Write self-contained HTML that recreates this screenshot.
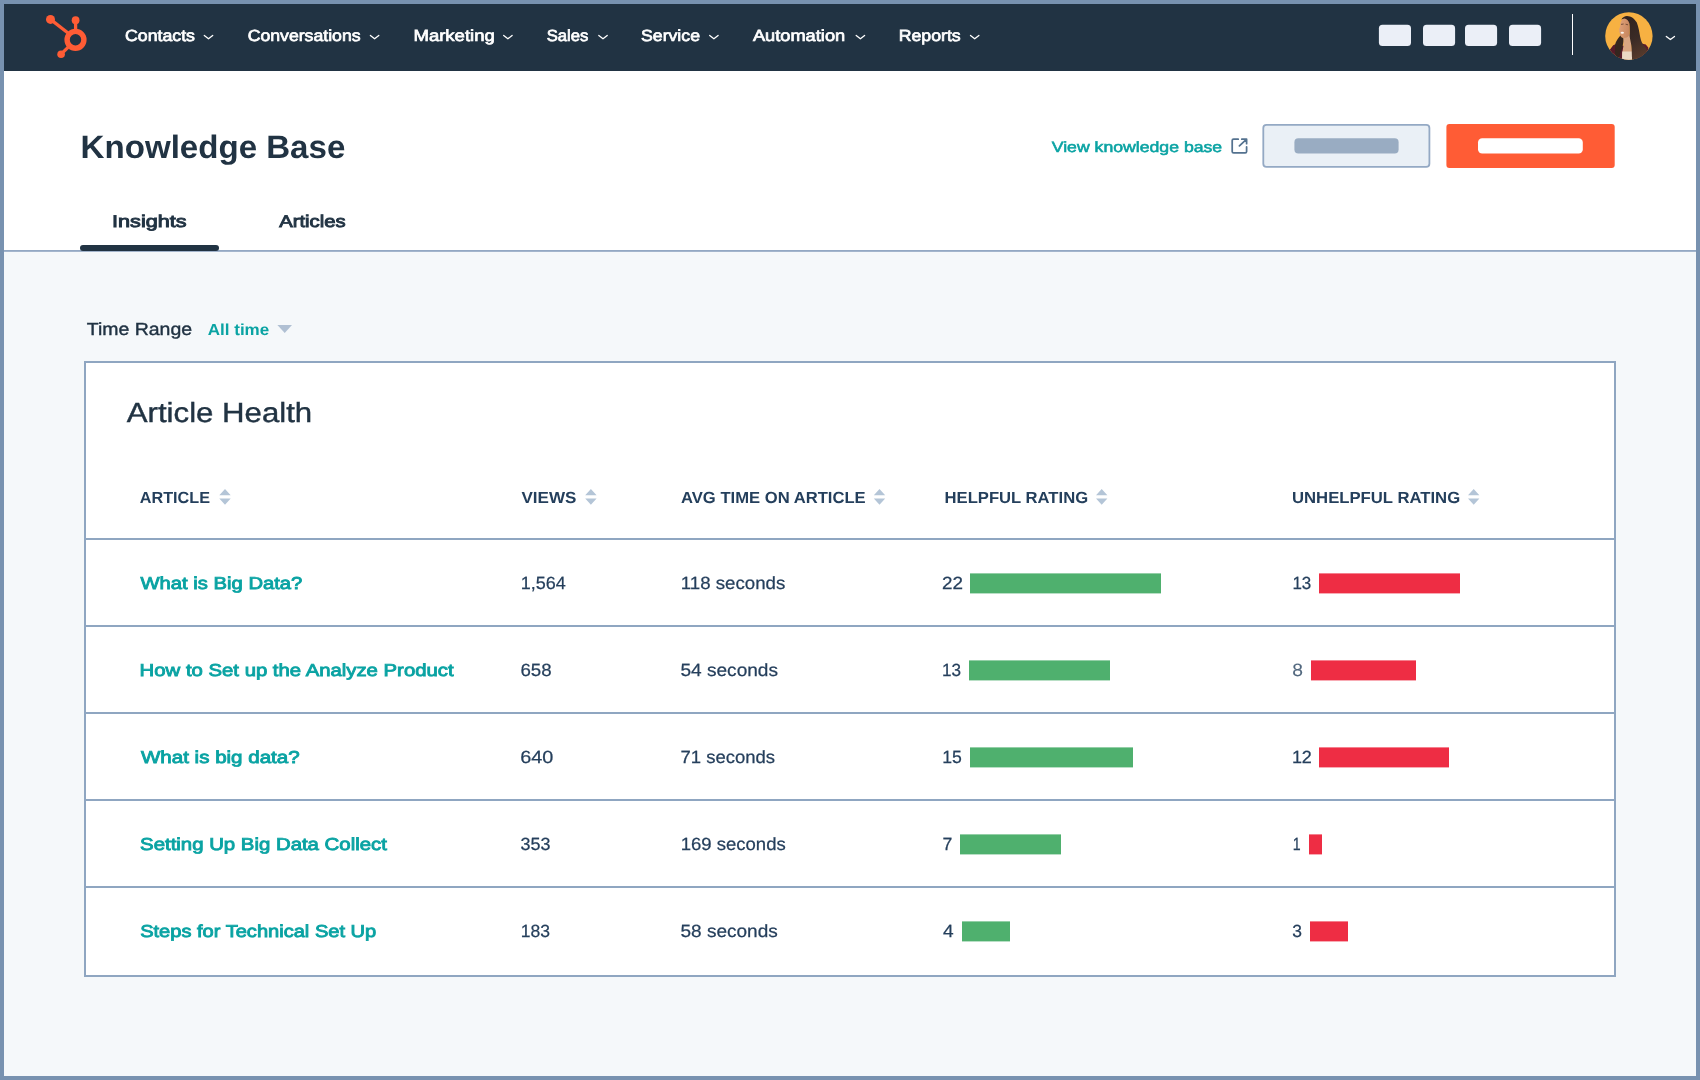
<!DOCTYPE html>
<html lang="en">
<head>
<meta charset="utf-8">
<title>Knowledge Base</title>
<style>

html,body{margin:0;padding:0}
body{width:1700px;height:1080px;overflow:hidden;background:#7892B0;font-family:"Liberation Sans",sans-serif;position:relative}
.t{position:absolute;white-space:nowrap;line-height:1;margin:0;padding:0;transform-origin:0 0;text-decoration:none;display:block}
.b{position:absolute}
svg{position:absolute;overflow:visible}
#txt{position:absolute;left:0;top:0;width:1692px;height:1072px;will-change:transform;text-rendering:geometricPrecision}
#app{position:absolute;left:4px;top:4px;width:1692px;height:1072px;background:#F5F8FA;overflow:hidden}
#nav{position:absolute;left:0;top:0;width:1692px;height:67px;background:#213343}
#hdr{position:absolute;left:0;top:67px;width:1692px;height:179px;background:#fff}
#hdrline{position:absolute;left:0;top:246px;width:1692px;height:2px;background:linear-gradient(#93A8C3 0,#93A8C3 50%,#A3B5CC 50%,#A3B5CC 100%)}
#card{position:absolute;left:80px;top:357px;width:1528px;height:612px;background:#fff;border:2px solid #8FA6C1}
.rl{position:absolute;left:82px;width:1528px;height:2px;background:#8FA6C1}
.pill{position:absolute;top:21px;width:32px;height:21px;border-radius:5px;background:#EAF0F6}
.gbar{position:absolute;height:20px;background:#4FB06E}
.rbar{position:absolute;height:20px;background:#EE2D44}

</style>
</head>
<body>
<div id="app">
<nav id="nav"></nav>
<header id="hdr"></header>
<div id="hdrline"></div>
<div id="tabbar" class="b" style="left:76px;top:241px;width:139px;height:6px;border-radius:3px;background:#213343"></div>
<section id="card"></section>
<div class="rl" style="top:534px"></div>
<div class="rl" style="top:621px"></div>
<div class="rl" style="top:708px"></div>
<div class="rl" style="top:795px"></div>
<div class="rl" style="top:882px"></div>
<div class="b" style="left:1568px;top:10px;width:1px;height:41px;background:#fff"></div>
<svg id="ico" style="left:-4px;top:-4px" width="1700" height="1080" viewBox="0 0 1700 1080">
<g id="pills" fill="#EBEFF7"><rect x="1378.9" y="24.8" width="32.1" height="21.3" rx="3.6"/><rect x="1423" y="24.8" width="32.1" height="21.3" rx="3.6"/><rect x="1465" y="24.8" width="32.1" height="21.3" rx="3.6"/><rect x="1509" y="24.8" width="32.1" height="21.3" rx="3.6"/></g>
<g id="bars">
<rect x="970" y="573.4" width="191" height="20" fill="#4FB06E"/><rect x="1319" y="573.4" width="141" height="20" fill="#EE2D44"/>
<rect x="969" y="660.4" width="141" height="20" fill="#4FB06E"/><rect x="1311" y="660.4" width="105" height="20" fill="#EE2D44"/>
<rect x="970" y="747.4" width="163" height="20" fill="#4FB06E"/><rect x="1319" y="747.4" width="130" height="20" fill="#EE2D44"/>
<rect x="960" y="834.4" width="101" height="20" fill="#4FB06E"/><rect x="1309" y="834.4" width="13" height="20" fill="#EE2D44"/>
<rect x="962" y="921.4" width="48" height="20" fill="#4FB06E"/><rect x="1310" y="921.4" width="38" height="20" fill="#EE2D44"/>
</g>
<g fill="#FF5C35" stroke="#FF5C35">
<circle cx="75.5" cy="39.8" r="8.4" fill="none" stroke-width="5.4"/>
<circle cx="50.5" cy="19.4" r="4.5" stroke="none"/>
<circle cx="75.6" cy="20.2" r="3.9" stroke="none"/>
<circle cx="61.1" cy="54.2" r="3.8" stroke="none"/>
<line x1="50.5" y1="19.4" x2="68" y2="33" stroke-width="3.3"/>
<line x1="75.6" y1="20.2" x2="75.6" y2="30" stroke-width="3.3"/>
<line x1="61.1" y1="54.2" x2="68.5" y2="46.8" stroke-width="3.3"/>
</g>
<path d="M204.3 35.5 L208.5 38.8 L212.7 35.5" fill="none" stroke="#fff" stroke-width="1.3" stroke-linecap="round" stroke-linejoin="round"/>
<path d="M370.4 35.5 L374.6 38.8 L378.8 35.5" fill="none" stroke="#fff" stroke-width="1.3" stroke-linecap="round" stroke-linejoin="round"/>
<path d="M503.7 35.5 L507.9 38.8 L512.1 35.5" fill="none" stroke="#fff" stroke-width="1.3" stroke-linecap="round" stroke-linejoin="round"/>
<path d="M598.8 35.5 L603.0 38.8 L607.2 35.5" fill="none" stroke="#fff" stroke-width="1.3" stroke-linecap="round" stroke-linejoin="round"/>
<path d="M709.7 35.5 L713.9 38.8 L718.1 35.5" fill="none" stroke="#fff" stroke-width="1.3" stroke-linecap="round" stroke-linejoin="round"/>
<path d="M856.2 35.5 L860.4 38.8 L864.6 35.5" fill="none" stroke="#fff" stroke-width="1.3" stroke-linecap="round" stroke-linejoin="round"/>
<path d="M970.5 35.5 L974.7 38.8 L978.9 35.5" fill="none" stroke="#fff" stroke-width="1.3" stroke-linecap="round" stroke-linejoin="round"/>
<path d="M1666.3 36.4 L1670.4 39.6 L1674.5 36.4" fill="none" stroke="#fff" stroke-width="1.3" stroke-linecap="round" stroke-linejoin="round"/>
<g id="avatar"><defs><clipPath id="avc"><circle cx="1628.9" cy="36" r="23.7"/></clipPath>
<linearGradient id="hairg" x1="0" y1="0" x2="0.3" y2="1"><stop offset="0" stop-color="#2E211E"/><stop offset="0.6" stop-color="#3B2B26"/><stop offset="1" stop-color="#54392B"/></linearGradient>
<linearGradient id="sking" x1="0" y1="0" x2="1" y2="0.3"><stop offset="0" stop-color="#E2A47C"/><stop offset="1" stop-color="#C98860"/></linearGradient></defs>
<circle cx="1628.9" cy="36" r="23.7" fill="#F7B142"/>
<g clip-path="url(#avc)">
<path d="M1607 53 L1610.2 49.2 L1613.2 45.2 L1616.5 43.8 L1624 46 L1624 62 L1607 62Z" fill="#561A29"/>
<path d="M1636 46 L1641.5 43.4 L1645.8 44.4 L1648.2 47.5 L1649 54 L1640 62 L1634 62Z" fill="#5B1B2B"/>
<path d="M1622.8 36 L1630.4 34 L1631.2 45 L1632 52 L1632 61 L1622 61 L1622.4 52 L1623.6 45Z" fill="#D9A582"/>
<path d="M1622.2 51.5 L1632 51.5 L1632 61 L1622 61Z" fill="#EAD8C4"/>
<path d="M1624.2 18.3 C1626.5 17.8 1628.8 19.5 1629.4 22 L1629.8 30 L1629 35.5 C1627.5 37.6 1625 38.2 1623.3 37.9 C1621.5 37.8 1620.3 37 1620.2 35.6 L1619.9 33.4 L1619.2 31.4 L1619.4 30 L1618.9 29.3 L1620 27 L1620.4 23.5 C1620.8 21 1622.2 19 1624.2 18.3Z" fill="url(#sking)"/>
<ellipse cx="1622.3" cy="32.7" rx="1.7" ry="0.95" fill="#FBF3EC"/>
<path d="M1621 24.4 L1623.6 24 M1625.6 24.2 L1628 24.8" stroke="#4A2E22" stroke-width="0.9" fill="none" opacity="0.75"/>
<path d="M1621.3 19.6 C1622.6 17.3 1624.8 16.2 1627 16 C1631 16.1 1634.6 18.6 1636.8 22.6 C1638.6 27 1639.3 32 1640.2 37 C1641 41 1642.2 44.2 1644.6 46.4 C1647 48.6 1647.2 50.6 1646.2 52.6 C1644.4 56 1641 58.6 1637.6 60 L1632.2 61.5 C1631.8 56 1631.9 50 1631.4 46 C1631 42.4 1630 39.4 1629.6 36 C1629.9 32 1630 27 1629.4 23.4 C1628.6 20.6 1626.6 18.8 1624.4 18.4 C1623.2 18.5 1622.2 19 1621.3 19.6Z" fill="url(#hairg)"/>
<path d="M1620.4 35.4 C1620.8 37 1622 37.8 1623.2 38 C1623.6 40.4 1623.4 43 1622.6 46 C1621.8 49 1620.8 52 1619.6 55.6 C1618.8 57.8 1617.6 58 1616.4 56.6 C1615 54.6 1614.6 52 1615 49.6 C1615.4 47.4 1614.8 45.6 1615.4 43.6 C1616 41.4 1617.4 39.4 1618.6 37.8 C1619.4 36.8 1619.9 36 1620.4 35.4Z" fill="#35261F"/>
</g></g>
<g id="btn-secondary"><rect x="1263.3" y="124.8" width="166.1" height="42.1" rx="3.2" fill="#EAF0F6" stroke="#94A9C4" stroke-width="1.8"/><rect x="1294.4" y="138.3" width="104.2" height="15.3" rx="4" fill="#99ACC2"/></g>
<g id="btn-primary"><rect x="1446.4" y="123.9" width="168.3" height="44" rx="3" fill="#FF5C35"/><rect x="1478" y="138.2" width="104.8" height="15.4" rx="4.2" fill="#fff"/></g>
<g id="ext-link" fill="none" stroke="#54728F" stroke-width="1.75" stroke-linecap="round" stroke-linejoin="round"><path d="M1238.2 139.2 H1233.6 Q1232.2 139.2 1232.2 140.6 V151.4 Q1232.2 152.8 1233.6 152.8 H1245.2 Q1246.6 152.8 1246.6 151.4 V146.9"/><path d="M1239.4 145.8 L1246.4 139.4 M1241.8 139.2 H1246.6 V143.7"/></g>
<path d="M277.4 325 H292 L284.7 333 Z" fill="#B0C0D3"/>
<path d="M219.3 495.2 L225.0 489 L230.70000000000002 495.2 Z M219.3 498.5 L225.0 504.8 L230.70000000000002 498.5 Z" fill="#B4C5D7"/>
<path d="M585.2 495.2 L590.9000000000001 489 L596.6 495.2 Z M585.2 498.5 L590.9000000000001 504.8 L596.6 498.5 Z" fill="#B4C5D7"/>
<path d="M873.8 495.2 L879.5 489 L885.1999999999999 495.2 Z M873.8 498.5 L879.5 504.8 L885.1999999999999 498.5 Z" fill="#B4C5D7"/>
<path d="M1096 495.2 L1101.7 489 L1107.4 495.2 Z M1096 498.5 L1101.7 504.8 L1107.4 498.5 Z" fill="#B4C5D7"/>
<path d="M1468 495.2 L1473.7 489 L1479.4 495.2 Z M1468 498.5 L1473.7 504.8 L1479.4 498.5 Z" fill="#B4C5D7"/>
</svg>
<div id="txt">
<a id="nav0" class="t" style="left:121px;top:24px;font-size:16.14px;font-weight:400;color:#fff;-webkit-text-stroke:0.7px #fff;transform:translate(0.01px,0.00px) scale(1.0995,1.0000);">Contacts</a>
<a id="nav1" class="t" style="left:243px;top:24px;font-size:16.14px;font-weight:400;color:#fff;-webkit-text-stroke:0.7px #fff;transform:translate(0.63px,0.00px) scale(1.0957,1.0000);">Conversations</a>
<a id="nav2" class="t" style="left:409px;top:24px;font-size:16.14px;font-weight:400;color:#fff;-webkit-text-stroke:0.7px #fff;transform:translate(0.46px,0.00px) scale(1.1481,1.0000);">Marketing</a>
<a id="nav3" class="t" style="left:542px;top:24px;font-size:16.14px;font-weight:400;color:#fff;-webkit-text-stroke:0.7px #fff;transform:translate(0.67px,0.00px) scale(1.0336,1.0000);">Sales</a>
<a id="nav4" class="t" style="left:637px;top:24px;font-size:16.14px;font-weight:400;color:#fff;-webkit-text-stroke:0.7px #fff;transform:translate(0.02px,0.00px) scale(1.0963,1.0000);">Service</a>
<a id="nav5" class="t" style="left:748px;top:24px;font-size:16.14px;font-weight:400;color:#fff;-webkit-text-stroke:0.7px #fff;transform:translate(0.91px,0.00px) scale(1.1311,1.0000);">Automation</a>
<a id="nav6" class="t" style="left:894px;top:24px;font-size:16.14px;font-weight:400;color:#fff;-webkit-text-stroke:0.7px #fff;transform:translate(0.73px,0.00px) scale(1.0978,1.0000);">Reports</a>
<h1 id="title" class="t" style="left:76px;top:127px;font-size:32.34px;font-weight:700;color:#213343;transform:translate(0.60px,0.00px) scale(1.0232,1.0000);">Knowledge Base</h1>
<a id="tab0" class="t" style="left:108px;top:210px;font-size:16.93px;font-weight:400;color:#213343;-webkit-text-stroke:0.9px #213343;transform:translate(0.04px,0.00px) scale(1.2796,1.0000);">Insights</a>
<a id="tab1" class="t" style="left:275px;top:210px;font-size:16.93px;font-weight:400;color:#213343;-webkit-text-stroke:0.9px #213343;transform:translate(0.22px,0.00px) scale(1.1974,1.0000);">Articles</a>
<a id="viewkb" class="t" style="left:1047px;top:137px;font-size:14.91px;font-weight:400;color:#0AA3A3;-webkit-text-stroke:0.55px #0AA3A3;transform:translate(0.74px,0.00px) scale(1.1843,1.0000);">View knowledge base</a>
<label id="trl" class="t" style="left:82px;top:317px;font-size:17.56px;font-weight:400;color:#213343;-webkit-text-stroke:0.4px #213343;transform:translate(0.76px,0.00px) scale(1.1095,1.0000);">Time Range</label>
<a id="trv" class="t" style="left:203px;top:319px;font-size:15.93px;font-weight:700;color:#0AA3A3;transform:translate(0.72px,0.00px) scale(1.0697,1.0000);">All time</a>
<h2 id="h2" class="t" style="left:122px;top:395px;font-size:27.73px;font-weight:400;color:#213343;-webkit-text-stroke:0.4px #213343;transform:translate(0.77px,0.00px) scale(1.1250,1.0000);">Article Health</h2>
<span id="th0" class="t" style="left:135px;top:486px;font-size:16.08px;font-weight:700;color:#243F5C;transform:translate(0.73px,0.00px) scale(1.0081,1.0000);">ARTICLE</span>
<span id="th1" class="t" style="left:517px;top:486px;font-size:16.08px;font-weight:700;color:#243F5C;transform:translate(0.42px,0.00px) scale(1.0608,1.0000);">VIEWS</span>
<span id="th2" class="t" style="left:677px;top:486px;font-size:16.08px;font-weight:700;color:#243F5C;transform:translate(0.01px,0.00px) scale(1.0336,1.0000);">AVG TIME ON ARTICLE</span>
<span id="th3" class="t" style="left:940px;top:486px;font-size:16.08px;font-weight:700;color:#243F5C;transform:translate(0.57px,0.00px) scale(1.0344,1.0000);">HELPFUL RATING</span>
<span id="th4" class="t" style="left:1287px;top:486px;font-size:16.08px;font-weight:700;color:#243F5C;transform:translate(0.96px,0.00px) scale(1.0383,1.0000);">UNHELPFUL RATING</span>
<a id="r0a" class="t" style="left:136px;top:571px;font-size:17.26px;font-weight:400;color:#0AA3A3;-webkit-text-stroke:0.85px #0AA3A3;transform:translate(0.53px,0.00px) scale(1.1720,1.0000);">What is Big Data?</a>
<span id="r0v" class="t" style="left:516px;top:571px;font-size:17.69px;font-weight:400;color:#253F5C;-webkit-text-stroke:0.25px #253F5C;transform:translate(0.86px,0.00px) scale(1.0167,1.0000);">1,564</span>
<span id="r0t" class="t" style="left:676px;top:571px;font-size:17.69px;font-weight:400;color:#253F5C;-webkit-text-stroke:0.25px #253F5C;transform:translate(0.81px,0.00px) scale(1.0552,1.0000);">118 seconds</span>
<span id="r0h" class="t" style="left:938px;top:571px;font-size:17.69px;font-weight:400;color:#253F5C;-webkit-text-stroke:0.25px #253F5C;transform:translate(0.00px,0.00px) scale(1.0658,1.0000);">22</span>
<span id="r0u" class="t" style="left:1288px;top:571px;font-size:17.69px;font-weight:400;color:#253F5C;-webkit-text-stroke:0.25px #253F5C;transform:translate(0.42px,0.00px) scale(0.9594,1.0000);">13</span>
<a id="r1a" class="t" style="left:135px;top:658px;font-size:17.26px;font-weight:400;color:#0AA3A3;-webkit-text-stroke:0.85px #0AA3A3;transform:translate(0.61px,0.00px) scale(1.1778,1.0000);">How to Set up the Analyze Product</a>
<span id="r1v" class="t" style="left:516px;top:658px;font-size:17.69px;font-weight:400;color:#253F5C;-webkit-text-stroke:0.25px #253F5C;transform:translate(0.40px,0.00px) scale(1.0567,1.0000);">658</span>
<span id="r1t" class="t" style="left:676px;top:658px;font-size:17.69px;font-weight:400;color:#253F5C;-webkit-text-stroke:0.25px #253F5C;transform:translate(0.43px,0.00px) scale(1.0787,1.0000);">54 seconds</span>
<span id="r1h" class="t" style="left:938px;top:658px;font-size:17.69px;font-weight:400;color:#253F5C;-webkit-text-stroke:0.25px #253F5C;transform:translate(0.02px,0.00px) scale(0.9690,1.0000);">13</span>
<span id="r1u" class="t" style="left:1288px;top:658px;font-size:17.69px;font-weight:400;color:#51677E;-webkit-text-stroke:0.1px #51677E;transform:translate(0.14px,0.00px) scale(1.0905,1.0000);">8</span>
<a id="r2a" class="t" style="left:136px;top:745px;font-size:17.26px;font-weight:400;color:#0AA3A3;-webkit-text-stroke:0.85px #0AA3A3;transform:translate(0.89px,0.00px) scale(1.1915,1.0000);">What is big data?</a>
<span id="r2v" class="t" style="left:516px;top:745px;font-size:17.69px;font-weight:400;color:#253F5C;-webkit-text-stroke:0.25px #253F5C;transform:translate(0.30px,0.00px) scale(1.1208,1.0000);">640</span>
<span id="r2t" class="t" style="left:676px;top:745px;font-size:17.69px;font-weight:400;color:#253F5C;-webkit-text-stroke:0.25px #253F5C;transform:translate(0.51px,0.00px) scale(1.0455,1.0000);">71 seconds</span>
<span id="r2h" class="t" style="left:938px;top:745px;font-size:17.69px;font-weight:400;color:#253F5C;-webkit-text-stroke:0.25px #253F5C;transform:translate(0.13px,0.00px) scale(0.9968,1.0000);">15</span>
<span id="r2u" class="t" style="left:1287px;top:745px;font-size:17.69px;font-weight:400;color:#253F5C;-webkit-text-stroke:0.25px #253F5C;transform:translate(0.88px,0.00px) scale(1.0158,1.0000);">12</span>
<a id="r3a" class="t" style="left:136px;top:832px;font-size:17.26px;font-weight:400;color:#0AA3A3;-webkit-text-stroke:0.85px #0AA3A3;transform:translate(0.08px,0.00px) scale(1.1806,1.0000);">Setting Up Big Data Collect</a>
<span id="r3v" class="t" style="left:516px;top:832px;font-size:17.69px;font-weight:400;color:#253F5C;-webkit-text-stroke:0.25px #253F5C;transform:translate(0.58px,0.00px) scale(1.0141,1.0000);">353</span>
<span id="r3t" class="t" style="left:676px;top:832px;font-size:17.69px;font-weight:400;color:#253F5C;-webkit-text-stroke:0.25px #253F5C;transform:translate(0.68px,0.00px) scale(1.0469,1.0000);">169 seconds</span>
<span id="r3h" class="t" style="left:938px;top:832px;font-size:17.69px;font-weight:400;color:#253F5C;-webkit-text-stroke:0.25px #253F5C;transform:translate(0.51px,0.00px) scale(0.9998,1.0000);">7</span>
<span id="r3u" class="t" style="left:1288px;top:832px;font-size:17.69px;font-weight:400;color:#253F5C;-webkit-text-stroke:0.25px #253F5C;transform:translate(0.67px,0.00px) scale(0.8004,1.0000);">1</span>
<a id="r4a" class="t" style="left:136px;top:919px;font-size:17.26px;font-weight:400;color:#0AA3A3;-webkit-text-stroke:0.85px #0AA3A3;transform:translate(0.14px,0.00px) scale(1.1633,1.0000);">Steps for Technical Set Up</a>
<span id="r4v" class="t" style="left:516px;top:919px;font-size:17.69px;font-weight:400;color:#253F5C;-webkit-text-stroke:0.25px #253F5C;transform:translate(0.86px,0.00px) scale(0.9913,1.0000);">183</span>
<span id="r4t" class="t" style="left:676px;top:919px;font-size:17.69px;font-weight:400;color:#253F5C;-webkit-text-stroke:0.25px #253F5C;transform:translate(0.43px,0.00px) scale(1.0763,1.0000);">58 seconds</span>
<span id="r4h" class="t" style="left:939px;top:919px;font-size:17.69px;font-weight:400;color:#253F5C;-webkit-text-stroke:0.25px #253F5C;transform:translate(0.01px,0.00px) scale(1.0797,1.0000);">4</span>
<span id="r4u" class="t" style="left:1288px;top:919px;font-size:17.69px;font-weight:400;color:#253F5C;-webkit-text-stroke:0.25px #253F5C;transform:translate(0.36px,0.00px) scale(0.9868,1.0000);">3</span>
</div>
</div>
</body>
</html>
